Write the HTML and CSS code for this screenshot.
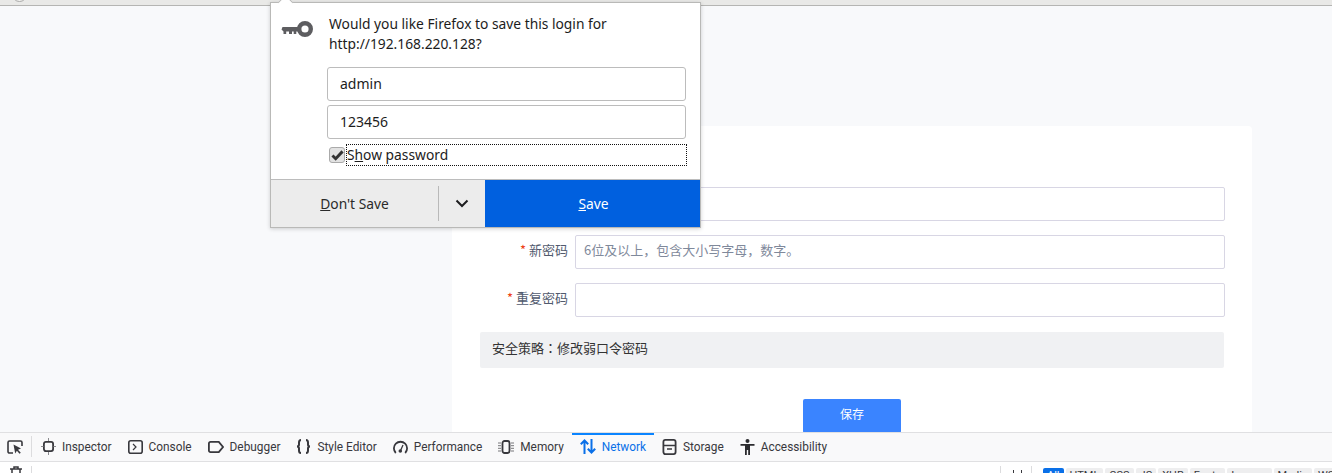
FILE: index.html
```html
<!DOCTYPE html>
<html lang="zh">
<head>
<meta charset="utf-8">
<title>修改密码</title>
<link rel="stylesheet" href="styles.css">
</head>
<body>
<div class="app">
  <div class="chrome-strip"><span class="chrome-circle"></span></div>
  <main class="page">
    <section class="card">
      <div class="field"><label class="field-label"></label><input class="field-input" type="password"></div>
      <div class="field"><label class="field-label"><span class="req">*</span> 新密码</label><input class="field-input" placeholder="6位及以上，包含大小写字母，数字。"></div>
      <div class="field"><label class="field-label"><span class="req">*</span> 重复密码</label><input class="field-input" type="password"></div>
      <div class="notice">安全策略<span class="colon" lang="zh-Hant-TW">：</span>修改弱口令密码</div>
      <div class="actions"><button class="save-btn">保存</button></div>
    </section>
  </main>

  <footer class="devtools">
    <nav class="tabs">
      <span class="picker">
        <svg width="16" height="16" viewBox="0 0 16 16" fill="none" stroke="#38383d" stroke-width="1.6"><path d="M6 14H2.500A1.500 1.500 0 0 1 1 12.500v-9A1.500 1.500 0 0 1 2.500 2h11A1.500 1.500 0 0 1 15 3.500V7"/><path d="M6.500 5.500 14 9.500l-3 1.200 2.800 3-1.300 1.100-2.600-3-1.700 2.600z" fill="#38383d" stroke="none"/></svg>
      </span>
      <a class="tab">
        <svg width="15" height="17" viewBox="0 0 15 17" fill="none" stroke="#38383d"><rect x="2.900" y="3.900" width="9.200" height="9.200" rx="2" stroke-width="1.800"/><path d="M7.500 0v3M7.500 14v3M0 8.500h2.500M12.500 8.500H15" stroke="#8a8a8e"/></svg>
        Inspector</a>
      <a class="tab">
        <svg width="15" height="14" viewBox="0 0 15 14" fill="none" stroke="#38383d" stroke-width="1.600"><rect x=".8" y=".8" width="13.400" height="12.400" rx="2"/><path d="m5 4 3 3-3 3" stroke-width="1.200"/></svg>
        Console</a>
      <a class="tab">
        <svg width="16" height="12" viewBox="0 0 16 12" fill="none" stroke="#38383d" stroke-width="1.800"><path d="M2.500.9h8.300l4.200 5.100-4.200 5.100H2.500A1.600 1.600 0 0 1 .9 9.500v-7A1.600 1.600 0 0 1 2.500.9z"/></svg>
        Debugger</a>
      <a class="tab">
        <svg width="15" height="15" viewBox="0 0 15 15" fill="none" stroke="#38383d" stroke-width="2"><path d="M5 1C3 1 3 2 3 3.500V5.500C3 6.800 2.500 7.500 1 7.500c1.500 0 2 .7 2 2v2C3 13 3 14 5 14M10 1c2 0 2 1 2 2.500v2c0 1.300.5 2 2 2-1.500 0-2 .7-2 2v2c0 1.500 0 2.500-2 2.500"/></svg>
        Style Editor</a>
      <a class="tab">
        <svg width="15" height="14" viewBox="0 0 15 14" fill="none" stroke="#38383d" stroke-width="1.800"><path d="M2.800 13A6.600 6.600 0 1 1 12.200 13"/><path d="M10 5 7.800 10" stroke-width="1.300"/><circle cx="7.300" cy="11" r="1.800" fill="#38383d" stroke="none"/></svg>
        Performance</a>
      <a class="tab">
        <svg width="16" height="14" viewBox="0 0 16 14" fill="none" stroke="#38383d"><rect x="4.500" y="1" width="7" height="12" rx="2" stroke-width="1.800"/><path d="M0 3h3M0 5.700h3M0 8.300h3M0 11h3M13 3h3M13 5.700h3M13 8.300h3M13 11h3" stroke="#77777a"/></svg>
        Memory</a>
      <a class="tab tab-active">
        <svg width="16" height="15" viewBox="0 0 16 15" fill="none" stroke="#0a70e8" stroke-width="2"><path d="M4.500 15V1.500M.8 5.300l3.700-3.800 3.700 3.800M11.500 0v13.500M7.800 9.700l3.700 3.800 3.700-3.800"/></svg>
        Network</a>
      <a class="tab">
        <svg width="15" height="16" viewBox="0 0 15 16" fill="none" stroke="#38383d" stroke-width="1.800"><rect x="1.400" y=".9" width="12.200" height="14.200" rx="2"/><path d="M1.500 6.500h12M5 10h5" stroke-width="1.500"/></svg>
        Storage</a>
      <a class="tab">
        <svg width="15" height="16" viewBox="0 0 15 16" fill="#2b2b2f"><circle cx="7.500" cy="2" r="2"/><path d="M.5 5h14v1.800H10V16H8.200v-5H6.800v5H5V6.800H.5z"/></svg>
        Accessibility</a>
    </nav>
    <div class="netbar">
      <span class="trash">
        <svg width="12" height="14" viewBox="0 0 12 14" fill="none" stroke="#38383d" stroke-width="1.500"><path d="M0 3h12M4 3V1h4v2M2 3v10h8V3"/></svg>
      </span>
      <div class="filter"><span class="filter-icon"></span><span class="filter-text">Filter URLs</span></div>
      <span class="pause"></span>
      <div class="chips">
        <span class="chip chip-on">All</span>
        <span class="chip">HTML</span>
        <span class="chip">CSS</span>
        <span class="chip">JS</span>
        <span class="chip">XHR</span>
        <span class="chip">Fonts</span>
        <span class="chip">Images</span>
        <span class="chip">Media</span>
        <span class="chip">WS</span>
      </div>
    </div>
  </footer>

  <aside class="popup">
    <span class="popup-arrow"></span>
    <div class="popup-body">
      <svg class="key" width="32" height="16" viewBox="0 0 32 16"><path d="M1.500 6h16v4.500h-2.200V13h-2.600v-2.500H11V13H8v-2.500H5.200V13H2.500v-2.500L.5 8.500z" fill="#5d5d60"/><circle cx="24" cy="8" r="5.800" fill="none" stroke="#5d5d60" stroke-width="4.400"/></svg>
      <div class="popup-content">
        <p class="popup-msg">Would you like Firefox to save this login for<br>http://192.168.220.128?</p>
        <input class="popup-input" value="admin">
        <input class="popup-input" value="123456">
        <div class="show-row">
          <span class="check"><svg width="13" height="11" viewBox="0 0 14 12" fill="none" stroke="#333" stroke-width="3.200"><path d="m1.500 6 3.500 3.500 7.500-8"/></svg></span>
          <span class="show-label">S<u>h</u>ow password</span>
        </div>
      </div>
    </div>
    <div class="popup-foot">
      <button class="btn-dont"><u>D</u>on't Save</button>
      <button class="btn-more"><svg width="14" height="9" viewBox="0 0 14 9" fill="none" stroke="#1d1d1f" stroke-width="2"><path d="m1.500 1.500 5.500 5.500 5.500-5.500"/></svg></button>
      <button class="btn-save"><u>S</u>ave</button>
    </div>
  </aside>
</div>
</body>
</html>
```

FILE: styles.css
```css
* { box-sizing: border-box; }
html, body { margin: 0; height: 100%; overflow: hidden; }
body { font-family: "Noto Sans", "Noto Sans CJK SC", sans-serif; color: #222; }

.app { position: relative; height: 473px; width: 1332px; display: flex; flex-direction: column; overflow: hidden; background: #f8f9fb; }

.chrome-strip { height: 6px; flex: none; background: #e9e9e7; border-bottom: 1px solid #b5b5b3; position: relative; overflow: hidden; padding-left: 12px; }
.chrome-circle { display: block; width: 15px; height: 15px; margin-top: -13px; border-radius: 50%; border: 1px solid #a9a9a7; background: #f2f2f0; }

.page { flex: 1; min-height: 0; overflow: hidden; padding: 120px 0 0 452px; }
.card { width: 800px; height: 400px; background: #fff; border-radius: 4px; padding: 61px 27px 0 28px; font-family: "Noto Sans CJK SC", "Noto Sans", sans-serif; font-size: 13px; }

.field { display: flex; align-items: center; height: 34px; margin-bottom: 14px; }
.field-label { width: 88px; text-align: right; color: #515a6e; margin-right: 7px; flex: none; padding-bottom: 5px; }
.req { color: #ed4014; }
.field-input { flex: 1; height: 34px; min-width: 0; border: 1px solid #d8d6e4; border-radius: 2px; padding: 0 8px 5px; font: inherit; background: #fff; outline: none; }
.field-input::placeholder { color: #7f899b; opacity: 1; }

.notice { height: 36px; margin-top: 15px; margin-right: 1px; line-height: 32px; background: #f0f1f3; border-radius: 2px; padding-left: 12px; color: #333; }
.colon { font-family: "Noto Sans CJK TC", sans-serif; }
.actions { display: flex; justify-content: center; margin-top: 31px; padding-right: 1px; }
.save-btn { width: 98px; height: 34px; border: 0; border-radius: 2px; background: #3a84ff; color: #fff; font: inherit; font-size: 12px; padding: 0 0 5px; }

.devtools { flex: none; height: 41px; background: #fff; border-top: 1px solid #e0e0e2; font-family: Roboto, sans-serif; font-size: 11.85px; overflow: hidden; }
.tabs { display: flex; align-items: stretch; height: 29px; background: #f9f9fa; border-bottom: 1px solid #e0e0e2; }
.picker { width: 32px; display: flex; align-items: center; justify-content: center; margin-right: 1px; padding-right: 1px; border-right: 1px solid #dcdcde; margin-top: 3px; margin-bottom: 4px; }
.tab { display: flex; align-items: center; gap: 6px; padding: 0 8px 3px; color: #38383d; white-space: nowrap; border-top: 2px solid transparent; }
.tab-active { color: #0a70e8; border-top-color: #0a84ff; }

.netbar { position: relative; display: flex; align-items: flex-start; height: 30px; background: #fff; }
.trash { width: 32px; padding-left: 10px; margin-top: 4px; flex: none; height: 24px; border-right: 1px solid #dcdcde; }
.filter { display: flex; align-items: flex-start; gap: 6px; width: 969px; padding: 7px 0 0 10px; color: #b0b0b3; flex: none; height: 24px; border-right: 1px solid #dcdcde; margin-top: 4px; line-height: 12px; }
.filter-icon { width: 8px; height: 7px; margin-top: 2px; border: 1px solid #b0b0b3; border-radius: 1px; }
.filter-text { font-size: 12px; }
.pause { width: 31px; flex: none; height: 24px; margin-top: 4px; border-right: 1px solid #dcdcde; position: relative; }
.pause::after { content: ""; position: absolute; left: 12px; top: 4px; width: 7px; height: 12px; border-left: 1px solid #38383d; border-right: 1px solid #38383d; }
.chips { display: flex; gap: 2px; padding: 6px 0 0 11px; white-space: nowrap; }
.chip { height: 18px; padding: 2px 4px 0; background: #eeeeef; border-radius: 2px; font-size: 11px; color: #38383d; line-height: 12px; }
.chip-on { background: #0a70e8; color: #fff; }

.popup { position: absolute; left: 270px; top: 2px; width: 431px; height: 226px; background: #fff; border: 1px solid #b9b9b7; box-shadow: 0 1px 4px rgba(0,0,0,.18); font-size: 13.8px; color: #1c1c1c; }
.popup-arrow { position: absolute; left: 9px; top: -6px; width: 11px; height: 11px; background: #fff; border: 1px solid #b9b9b7; border-right: 0; border-bottom: 0; transform: rotate(45deg); }
.popup-body { position: relative; display: flex; height: 176px; padding: 11px 14px 0 10px; }
.key { flex: none; margin: 7px 16px 0 0; }
.popup-content { flex: 1; min-width: 0; margin-left: -2px; }
.popup-msg { margin: 0 0 13px 2px; line-height: 20px; }
.popup-input { display: block; width: 359px; height: 34px; margin-bottom: 4px; padding: 0 12px 2px; border: 1px solid #bcbcbc; border-radius: 3px; font: inherit; font-size: 14px; color: #1c1c1c; outline: none; }
.show-row { display: flex; align-items: center; height: 22px; margin-top: 5px; padding-left: 2px; }
.check { flex: none; width: 16px; height: 16px; margin-right: 1px; display: flex; align-items: center; justify-content: center; background: #e2e2e2; border: 1px solid #aaa; border-radius: 3px; }
.check svg { flex: none; }
.show-label { flex: none; width: 341px; height: 22px; line-height: 19px; border: 1px dotted #111; }

.popup-foot { display: flex; height: 48px; border-top: 1px solid #bcbcbc; }
.popup-foot button { border: 0; padding: 0; font: inherit; height: 47px; }
.btn-dont { width: 167px; background: #ececec; color: #2a2a2a; }
.btn-more { width: 47px; background: #ececec; position: relative; display: flex; align-items: center; justify-content: center; }
.btn-more::before { content: ""; position: absolute; left: 0; top: 6px; bottom: 6px; width: 1px; background: #b9b9b9; }
.popup-foot .btn-save { flex: 1; background: #0060df; color: #fff; padding-left: 2px; }
```
